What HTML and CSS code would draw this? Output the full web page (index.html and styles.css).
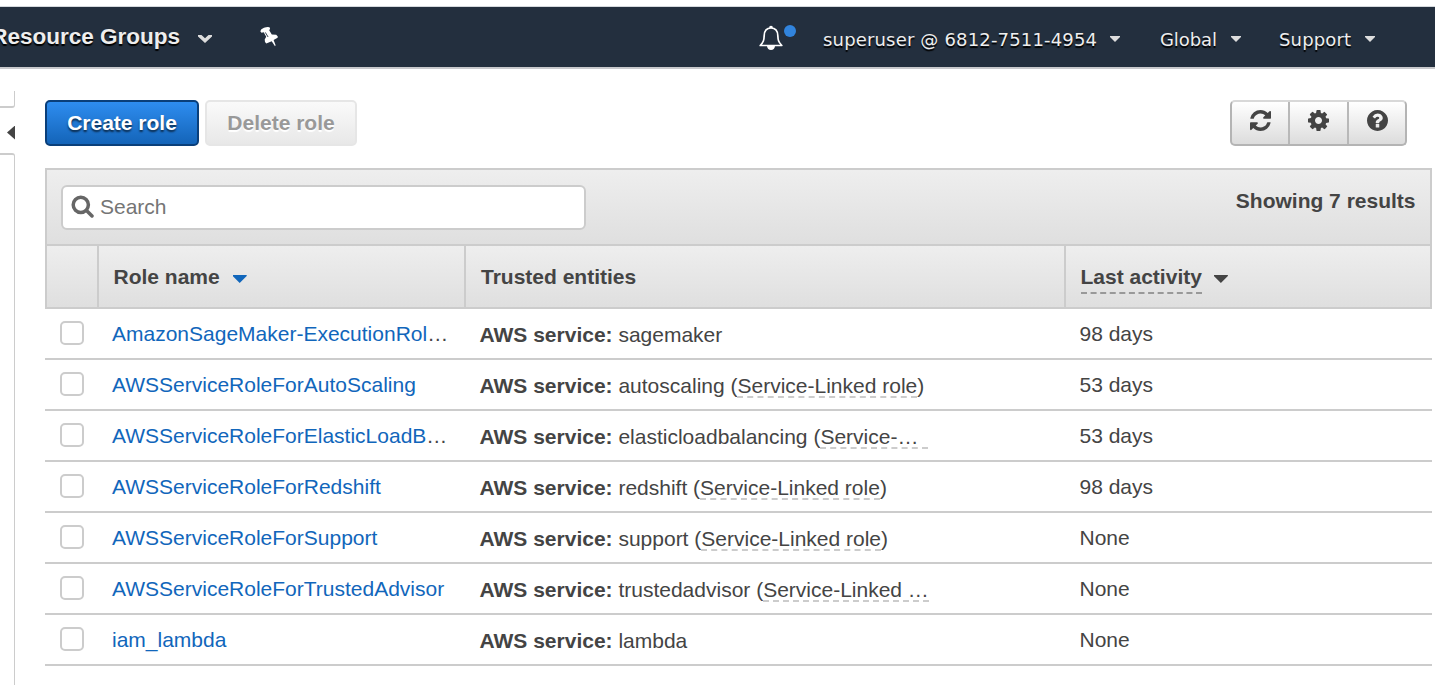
FILE: index.html
```html
<!DOCTYPE html>
<html lang="en">
<head>
<meta charset="utf-8">
<title>IAM Roles</title>
<link rel="stylesheet" href="styles.css">
</head>
<body>
<header class="topbar">
  <div class="nav-left">
    <span class="groups">Resource Groups</span>
    <svg class="chev" width="14" height="8" viewBox="0 0 14 8"><path d="M0 0h3.500L7 3.200 10.500 0H14v1.500L7 8 0 1.500z" fill="#ddd"/></svg>
    <svg class="pin" width="18" height="20" viewBox="0 0 18 20"><path d="M.3 4.200Q.6 2 4 .8T9.500.3l.6 1.500-.9 1.400 2.600 4.200 4.400.4 1.600 1.700-.2 1.300-4 2.300 2 5.200-.6.900-3.300-5-5.400 2.300L5 15l-.3-2.400 1.500-2.800L3.700 5.200l-2.200.5z" fill="#fff"/><path d="M5.300 5.400l2.800 4.600" stroke="#232f3e" stroke-width=".9"/></svg>
  </div>
  <nav class="nav-right">
    <span class="bell">
      <svg width="24" height="26" viewBox="0 0 24 26"><path d="M1.200 20.500C4.500 17 5 15.500 5.200 10.500 5.400 5.500 8 3 12 3s6.600 2.500 6.800 7.500c.2 5 .7 6.500 4 10z" fill="none" stroke="#fff" stroke-width="1.700" stroke-linejoin="round"/><path d="M10.300 3V1.500q1.700-1.500 3.400 0V3zM8 21h8q-.5 4-4 4t-4-4z" fill="#fff"/></svg>
      <i class="dot"></i>
    </span>
    <span class="item account">superuser @ 6812-7511-4954</span><i class="caret"></i>
    <span class="item region">Global</span><i class="caret"></i>
    <span class="item support">Support</span><i class="caret"></i>
  </nav>
</header>
<div class="page">
  <aside class="side">
    <div class="side-top"></div>
    <div class="handle"><i class="tri"></i></div>
    <div class="side-rest"></div>
  </aside>
  <main class="content">
    <div class="actions">
      <button class="btn primary">Create role</button>
      <button class="btn disabled">Delete role</button>
      <div class="tools">
        <button class="tool"><svg width="21" height="21" viewBox="0 0 1536 1536"><path fill="#444" d="M1511 928q0 5-1 7-64 268-268 434.500T764 1536q-146 0-282.500-55T238 1324l-129 129q-19 19-45 19t-45-19-19-45V960q0-26 19-45t45-19h448q26 0 45 19t19 45-19 45l-137 137q71 66 161 102t187 36q134 0 250-65t186-179q11-17 53-117 8-23 30-23h192q13 0 22.500 9.500t9.500 22.500zm25-800v448q0 26-19 45t-45 19h-448q-26 0-45-19t-19-45 19-45l138-138Q969 256 768 256q-134 0-250 65T332 500q-11 17-53 117-8 23-30 23H50q-13 0-22.500-9.500T18 608v-7q65-268 270-434.500T768 0q146 0 284 55.500T1297 212l130-129q19-19 45-19t45 19 19 45z"/></svg></button>
        <button class="tool"><svg width="21" height="21" viewBox="0 0 1536 1536"><path fill="#444" d="M1024 768q0-106-75-181t-181-75-181 75-75 181 75 181 181 75 181-75 75-181zm512-109v222q0 12-8 23t-20 13l-185 28q-19 54-39 91 35 50 107 138 10 12 10 25t-9 23q-27 37-99 108t-94 71q-12 0-26-9l-138-108q-44 23-91 38-16 136-29 186-7 28-36 28H657q-14 0-24.500-8.500T621 1506l-28-184q-49-16-90-37l-141 107q-10 9-25 9-14 0-25-11-126-114-165-168-7-10-7-23 0-12 8-23 15-21 51-66.500t54-70.500q-27-50-41-99L29 913q-13-2-21-12.500T0 877V655q0-12 8-23t19-13l186-28q14-46 39-92-40-57-107-138-10-12-10-24 0-10 9-23 26-36 98.500-107.500T337 135q13 0 26 10l138 107q44-23 91-38 16-136 29-186 7-28 36-28h222q14 0 24.500 8.500T915 30l28 184q49 16 90 37l142-107q9-9 24-9 13 0 25 10 129 119 165 170 7 8 7 22 0 12-8 23-15 21-51 66.500t-54 70.500q26 50 41 98l183 28q13 2 21 12.500t8 23.500z"/></svg></button>
        <button class="tool"><svg width="21" height="21" viewBox="0 0 1536 1536"><path fill="#444" d="M896 1248v-192q0-14-9-23t-23-9H672q-14 0-23 9t-9 23v192q0 14 9 23t23 9h192q14 0 23-9t9-23zm256-672q0-88-55.500-163T958 297t-170-41q-243 0-371 213-15 24 8 42l132 100q7 6 19 6 16 0 25-12 53-68 86-92 34-24 86-24 48 0 85.500 26t37.500 59q0 38-20 61t-68 45q-63 28-115.500 86.500T640 892v36q0 14 9 23t23 9h192q14 0 23-9t9-23q0-19 21.500-49.500T972 829q32-18 49-28.500t46-35 44.500-48 28-60.500 12.500-81zm384 192q0 209-103 385.500T1153.500 1433 768 1536t-385.500-103T103 1153.500 0 768t103-385.500T382.500 103 768 0t385.500 103T1433 382.500 1536 768z"/></svg></button>
      </div>
    </div>
    <section class="panel">
      <div class="filter">
        <div class="search">
          <svg width="23" height="23" viewBox="0 0 23 23"><circle cx="9.800" cy="9.800" r="7.600" fill="none" stroke="#666" stroke-width="3.500"/><path d="M15.500 15.500l5.500 5.500" stroke="#666" stroke-width="3.500" stroke-linecap="round"/></svg>
          <span>Search</span>
        </div>
        <div class="count">Showing 7 results</div>
      </div>
      <div class="grid head">
        <div></div>
        <div>Role name<i class="sort blue"></i></div>
        <div>Trusted entities</div>
        <div><span class="hint">Last activity</span><i class="sort"></i></div>
      </div>
    </section>
    <div class="rows">
      <div class="grid row"><div><i class="box"></i></div><div class="name">AmazonSageMaker-ExecutionRol<span class="more">…</span></div><div class="svc"><b>AWS service:</b> sagemaker</div><div class="last">98 days</div></div>
      <div class="grid row"><div><i class="box"></i></div><div class="name">AWSServiceRoleForAutoScaling</div><div class="svc"><b>AWS service:</b> autoscaling (<span class="linked">Service-Linked role</span>)</div><div class="last">53 days</div></div>
      <div class="grid row"><div><i class="box"></i></div><div class="name">AWSServiceRoleForElasticLoadB<span class="more">…</span></div><div class="svc"><b>AWS service:</b> elasticloadbalancing (<span class="linked cut-a">Service-…</span></div><div class="last">53 days</div></div>
      <div class="grid row"><div><i class="box"></i></div><div class="name">AWSServiceRoleForRedshift</div><div class="svc"><b>AWS service:</b> redshift (<span class="linked">Service-Linked role</span>)</div><div class="last">98 days</div></div>
      <div class="grid row"><div><i class="box"></i></div><div class="name">AWSServiceRoleForSupport</div><div class="svc"><b>AWS service:</b> support (<span class="linked">Service-Linked role</span>)</div><div class="last">None</div></div>
      <div class="grid row"><div><i class="box"></i></div><div class="name">AWSServiceRoleForTrustedAdvisor</div><div class="svc"><b>AWS service:</b> trustedadvisor (<span class="linked">Service-Linked …</span></div><div class="last">None</div></div>
      <div class="grid row"><div><i class="box"></i></div><div class="name">iam_lambda</div><div class="svc"><b>AWS service:</b> lambda</div><div class="last">None</div></div>
    </div>
  </main>
</div>
</body>
</html>
```
FILE: styles.css
```css
* { box-sizing: border-box; }
body {
  margin: 0;
  height: 685px;
  overflow: hidden;
  background: #fff;
  color: #444;
  font: 21px/24px "Liberation Sans", Arial, sans-serif;
}
svg { display: block; flex: none; }
.topbar {
  display: flex;
  justify-content: space-between;
  height: 63px;
  margin-top: 6px;
  border-top: 1px solid #d5d9dd;
  border-bottom: 2px solid #c8c9cc;
  background: #232f3e;
  overflow: hidden;
}
.nav-left { display: flex; }
.groups {
  width: 190px;
  margin-left: -10px;
  padding-top: 18px;
  text-align: right;
  white-space: nowrap;
  font-weight: bold;
  font-size: 22.5px;
  color: #eee;
  text-shadow: 0 2px 1px #000;
}
.chev { margin: 28px 0 0 18px; }
.pin { margin: 20px 0 0 48px; }
.nav-right {
  display: flex;
  font: 18px/24px "DejaVu Sans", Verdana, sans-serif;
  color: #eee;
  padding-right: 60px;
}
.item { padding-top: 21px; text-shadow: 0 2px 1px #000; white-space: nowrap; }
.account { width: 275px; letter-spacing: .17px; }
.region { width: 58px; margin-left: 38px; letter-spacing: -.1px; }
.support { width: 73px; margin-left: 38px; letter-spacing: .15px; }
.caret {
  width: 10px;
  height: 6px;
  margin: 29px 0 0 13px;
  background: #ddd;
  clip-path: polygon(0 0, 100% 0, 100% 17%, 50% 100%, 0 17%);
}
.account + .caret { margin: 29px 2px 0 12px; }
.bell { display: flex; width: 64px; padding-top: 18px; }
.dot { width: 12px; height: 12px; margin-left: 1px; border-radius: 50%; background: #3184dd; }

.page { display: flex; height: 616px; }
.side { width: 15px; padding-top: 22px; display: flex; flex-direction: column; flex: none; }
.side-top { height: 17px; border-right: 1px solid #ccc; border-bottom: 2px solid #ccc; border-bottom-right-radius: 3px; }
.handle { height: 45px; display: flex; align-items: center; justify-content: flex-end; padding-top: 4px; }
.tri { width: 8px; height: 14px; background: #444; clip-path: polygon(100% 0, 100% 100%, 0 50%); }
.side-rest { flex: 1; border-right: 1px solid #ccc; border-top: 2px solid #ccc; border-top-right-radius: 3px; }
.content { width: 1387px; margin-left: 30px; padding-top: 31px; flex: none; }

.actions { display: flex; height: 68px; }
.btn {
  height: 46px;
  padding: 0;
  border-radius: 5px;
  font: bold 21px/24px "Liberation Sans", Arial, sans-serif;
}
.primary {
  width: 154px;
  border: 2px solid #0a3f7a;
  background: linear-gradient(#2e8df0, #1464b8);
  color: #fff;
  text-shadow: 0 2px 2px rgba(0, 0, 0, .65);
}
.disabled {
  width: 152px;
  margin-left: 6px;
  border: 2px solid #e6e6e6;
  background: linear-gradient(#fafafa, #e8e8e8);
  color: #999;
  text-shadow: 0 2px 1px #fff;
}
.tools {
  display: flex;
  width: 177px;
  height: 46px;
  margin-left: auto;
  margin-right: 25px;
  border: 2px solid #b4b4b4;
  border-top-color: #d8d8d8;
  border-radius: 5px;
  background: linear-gradient(#fff, #dcdcdc);
}
.tool {
  flex: 1;
  display: flex;
  justify-content: center;
  padding: 8px 0 0 1px;
  border: 0;
  background: none;
}
.tool + .tool { border-left: 2px solid #b8b8b8; }

.panel { border: 2px solid #ccc; }
.filter {
  display: flex;
  justify-content: space-between;
  height: 76px;
  padding: 15px 14.5px 0 14px;
  border-bottom: 2px solid #ccc;
  background: linear-gradient(#eee, #dfdfdf);
}
.search {
  display: flex;
  align-items: center;
  gap: 6px;
  width: 525px;
  height: 45px;
  padding: 0 0 2px 8px;
  border: 2px solid #ccc;
  border-radius: 6px;
  background: #fff;
  color: #757575;
}
.count { font-weight: bold; padding-top: 4px; }
.grid { display: grid; grid-template-columns: 51px 367px 600px 1fr; }
.head {
  height: 61px;
  background: linear-gradient(#eee, #dfdfdf);
  font-weight: bold;
}
.head > div { padding: 19px 0 0 14.5px; white-space: nowrap; }
.head > div + div { border-left: 2px solid #ccc; margin-left: -1px; }
.head > div:nth-child(3) { padding-left: 15px; }
.hint { display: inline-block; height: 29px; border-bottom: 2px dashed #999; }
.sort {
  display: inline-block;
  width: 14px;
  height: 8px;
  margin-left: 12px;
  vertical-align: 1px;
  background: #444;
  clip-path: polygon(0 0, 100% 0, 100% 12%, 50% 100%, 0 12%);
}
.blue { margin-left: 13px; background: #1166bb; }
.row {
  grid-template-columns: 67px 367.5px 600px 1fr;
  height: 51px;
  border-bottom: 2px solid #ccc;
  white-space: nowrap;
}
.box { display: block; width: 24px; height: 24px; margin: 12px 0 0 15px; border: 2px solid #ccc; border-radius: 5px; }
.name { padding-top: 13px; color: #1166bb; }
.more { color: #444; }
.svc { padding-top: 14px; }
.last { padding-top: 13px; }
.linked { display: inline-block; height: 24px; border-bottom: 2px dashed #ccc; vertical-align: top; }
.cut-a { width: 108px; }
```
